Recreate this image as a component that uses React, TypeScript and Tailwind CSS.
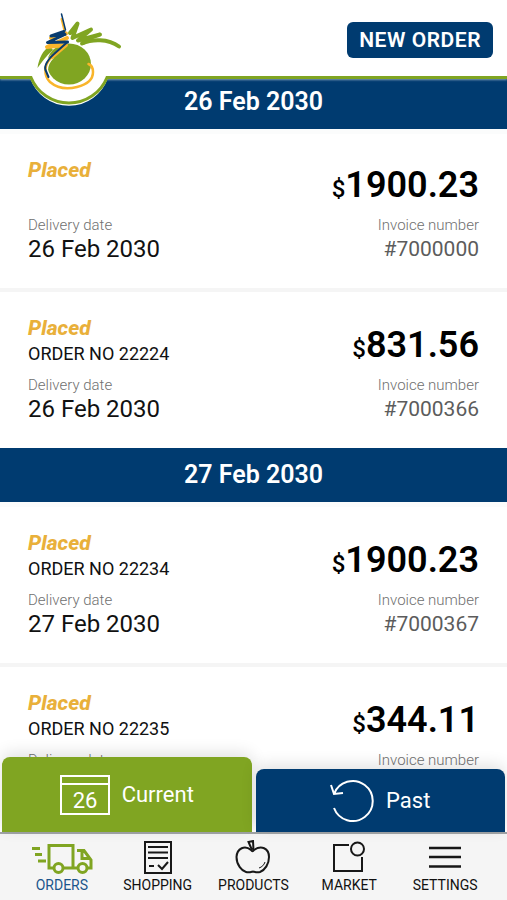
import type { ReactNode } from "react";

type Order = {
  id: string;
  orderNo?: string;
  date: string;
  amount: string;
  invoice: string;
};

const groups: { date: string; orders: Order[] }[] = [
  {
    date: "26 Feb 2030",
    orders: [
      { id: "a", date: "26 Feb 2030", amount: "1900.23", invoice: "#7000000" },
      { id: "b", orderNo: "22224", date: "26 Feb 2030", amount: "831.56", invoice: "#7000366" },
    ],
  },
  {
    date: "27 Feb 2030",
    orders: [
      { id: "c", orderNo: "22234", date: "27 Feb 2030", amount: "1900.23", invoice: "#7000367" },
      { id: "d", orderNo: "22235", date: "27 Feb 2030", amount: "344.11", invoice: "#7000368" },
    ],
  },
];

function Logo() {
  return (
    <svg viewBox="25 0 100 110" className="h-[110px] w-[100px]" aria-hidden="true">
      <path d="M30 75V77.500A41 41 0 0 0 108 77.500V75Z" fill="#fff" />
      <path d="M25 77.500H31A41 41 0 0 0 107 77.500H125" fill="none" stroke="#80a522" strokeWidth="3" />
      <ellipse cx="69" cy="64" rx="22" ry="20.500" fill="#80a522" />
      <path d="M37.500 68C39 58 43 50 50 46L53 50C46 56 42 62 37.500 68Z" fill="#80a522" />
      <g fill="none" strokeLinecap="round" strokeLinejoin="round">
        <path d="M70 33L77.500 23.500L72.500 38L91 29.500L78 40.500L100 34.500C92 37 86 39 83 43" stroke="#80a522" strokeWidth="4" />
        <path d="M82 43.500C92 39 108 38.500 119 46.500" stroke="#80a522" strokeWidth="4" />
        <path d="M52 57C44 65 45 75 50 79" stroke="#fff" strokeWidth="4" />
        <path d="M61.500 19L64.500 31" stroke="#f9b52b" strokeWidth="2" />
        <path d="M66 33.500L51 38M67 38L47 47L66 45L52 57" stroke="#f9b52b" strokeWidth="4" />
        <path d="M52 57C43 65 44 76 50 82C57 88 67 89.500 77 87C87 84.500 93 79 93 72C93 68 91 65 88.500 64" stroke="#f9b52b" strokeWidth="2.500" />
        <path d="M61.500 14L65.500 30" stroke="#083b6e" strokeWidth="1.500" />
        <path d="M64 31.500L51 36L65 34.500L47.500 42.500L67.500 42" stroke="#083b6e" strokeWidth="3" />
        <path d="M67.500 42L54 54C48 59 44 66 45.500 70L48.500 77" stroke="#083b6e" strokeWidth="2" />
      </g>
    </svg>
  );
}

function Truck() {
  return (
    <svg width="62" height="34" viewBox="0 0 62 34" fill="none" stroke="#80a522" strokeWidth="3" aria-hidden="true">
      <path d="M1 8.500H9M4 14.500H11M7 21H15M22 28H18V5.500H42V28H33M46 10.500H53L60 20V28H57M42 28H46M51 11V18.500H59" />
      <circle cx="27.500" cy="28" r="4.500" />
      <circle cx="51.500" cy="28" r="4.500" />
    </svg>
  );
}

function Receipt() {
  return (
    <svg width="28" height="34" viewBox="0 0 28 34" fill="none" stroke="#181818" strokeWidth="2" aria-hidden="true">
      <path d="M1 2H27V33H1ZM4 7H24M4 12.500H24M4 18H24M5 26H10M14 25L18 29L24 22" />
    </svg>
  );
}

function Apple() {
  return (
    <svg width="36" height="34" viewBox="0 0 36 34" fill="none" stroke="#181818" strokeWidth="2" aria-hidden="true">
      <path d="M16 10C10 5 2 8 1.500 17C1.500 25 7 31 11 32C14 33 16 32 18 31.500C20 32 22 33 25 32C30 30 34 24 34 17C34 8 26 5 19 10C18 11.500 17 11.500 16 10Z" />
      <path d="M17 10L13.500 2L18 1L18.500 10" />
      <path d="M24 28C27 27 29 25 30 22" strokeWidth="1" />
    </svg>
  );
}

function Market() {
  return (
    <svg width="32" height="32" viewBox="0 0 32 32" fill="none" stroke="#181818" strokeWidth="2" aria-hidden="true">
      <path d="M16 4H1V30H29V16" />
      <circle cx="24.500" cy="8" r="6.500" />
    </svg>
  );
}

function Menu() {
  return (
    <svg width="32" height="24" viewBox="0 0 32 24" stroke="#181818" strokeWidth="2.500" aria-hidden="true">
      <path d="M0 3H32M0 12H32M0 21.500H32" />
    </svg>
  );
}

function OrderCard({ order }: { order: Order }) {
  return (
    <article className="flex justify-between px-7 pt-6 pb-[25px] not-last:border-b-4 not-last:border-[#f5f5f5]">
      <div className="flex flex-col">
        <p className="text-[21px] leading-6 font-extrabold text-[#e9b03a] italic">Placed</p>
        {order.orderNo ? <p className="text-lg leading-7">ORDER NO {order.orderNo}</p> : <div className="h-[26px]" />}
        <p className="mt-[7px] text-[15px] leading-5 font-light text-[#707070]">Delivery date</p>
        <p className="text-2xl leading-7">{order.date}</p>
      </div>
      <div className="flex flex-col justify-end text-right">
        <p className="mb-2.5 text-4xl leading-10 font-semibold text-black">
          <span className="text-2xl font-medium">$</span>
          {order.amount}
        </p>
        <p className="text-[15px] leading-5 font-light text-[#707070]">Invoice number</p>
        <p className="text-[21px] leading-7 text-[#5c5c5c]">{order.invoice}</p>
      </div>
    </article>
  );
}

const navItems: { label: string; icon: ReactNode; active?: boolean }[] = [
  { label: "ORDERS", icon: <Truck />, active: true },
  { label: "SHOPPING", icon: <Receipt /> },
  { label: "PRODUCTS", icon: <Apple /> },
  { label: "MARKET", icon: <Market /> },
  { label: "SETTINGS", icon: <Menu /> },
];

export default function App() {
  return (
    <div className="flex h-screen flex-col bg-white font-['Roboto',sans-serif] text-[#111]">
      <header className="relative z-10 flex h-[79px] shrink-0 items-center justify-end border-b-[3px] border-[#80a522] px-3.5 pt-1 shadow-[0_1px_2px_rgba(255,255,255,0.5)]">
        <div className="absolute top-0 left-[25px]">
          <Logo />
        </div>
        <button className="h-9 rounded-md bg-[#003b70] px-3 text-[21px] leading-6 font-semibold tracking-wide text-white">NEW ORDER</button>
      </header>

      <main className="min-h-0 flex-1 overflow-y-auto [scrollbar-width:none]">
        {groups.map((group, i) => (
          <section key={group.date}>
            <h2 className={`flex items-center justify-center bg-[#003b70] text-[25px] font-semibold text-white ${i === 0 ? "h-[50px] pb-1" : "h-[54px]"}`}>
              {group.date}
            </h2>
            <div className="border-t-[5px] border-[#fbfcfc]">
              {group.orders.map((order) => (
                <OrderCard key={order.id} order={order} />
              ))}
            </div>
          </section>
        ))}
      </main>

      <footer className="relative shrink-0">
        <div className="-mt-3 flex items-end gap-1 px-0.5 text-[22px] text-white">
          <button className="flex h-[75px] flex-1 items-center justify-center gap-3 rounded-t-lg bg-[#80a522] shadow-[0_-4px_16px_rgba(0,0,0,0.12)]">
            <svg width="50" height="40" viewBox="0 0 50 40" fill="none" stroke="white" strokeWidth="2" aria-hidden="true">
              <path d="M1 1H49V39H1ZM1 9H49" />
              <text x="25" y="33" textAnchor="middle" fontSize="22" fill="white" stroke="none">26</text>
            </svg>
            Current
          </button>
          <button className="flex h-[63px] flex-1 items-center justify-center gap-3 rounded-t-lg bg-[#003b70] shadow-[0_-4px_16px_rgba(0,0,0,0.12)]">
            <svg width="44" height="44" viewBox="0 0 44 44" fill="none" stroke="white" strokeWidth="2" aria-hidden="true">
              <path d="M4 15A20 20 0 1 1 4 29M1 6L4 15L13 14" />
            </svg>
            Past
          </button>
        </div>
        <nav className="grid h-[68px] grid-cols-5 border-t-2 border-[#a0a4a6] bg-[#f5f5f5] px-3.5">
          {navItems.map((item) => (
            <a key={item.label} href="#" className="flex flex-col items-center justify-end pb-[5px]">
              <span className="flex h-9 items-center">{item.icon}</span>
              <span className={`text-sm leading-5 ${item.active ? "text-[#1b558c]" : ""}`}>{item.label}</span>
            </a>
          ))}
        </nav>
      </footer>
    </div>
  );
}
